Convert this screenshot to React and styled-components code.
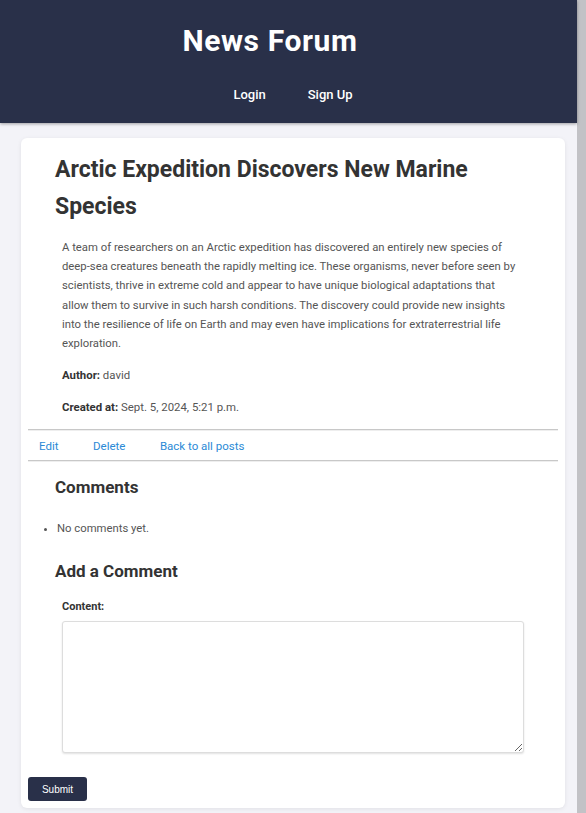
import React from 'react';
import styled, { createGlobalStyle } from 'styled-components';

const GlobalStyle = createGlobalStyle`
  html, body {
    margin: 0;
    padding: 0;
    background: #f3f3f8;
  }
  body {
    font-family: Roboto, "Liberation Sans", Arial, sans-serif;
    color: #333;
  }
  #root {
    width: calc(100% - 9px);
  }
`;

const post = {
  title: 'Arctic Expedition Discovers New Marine Species',
  content:
    'A team of researchers on an Arctic expedition has discovered an entirely new species of deep-sea creatures beneath the rapidly melting ice. These organisms, never before seen by scientists, thrive in extreme cold and appear to have unique biological adaptations that allow them to survive in such harsh conditions. The discovery could provide new insights into the resilience of life on Earth and may even have implications for extraterrestrial life exploration.',
  author: 'david',
  createdAt: 'Sept. 5, 2024, 5:21 p.m.',
};

const App = () => {
  return (
    <>
      <GlobalStyle />
      <Header>
        <SiteTitle>News Forum</SiteTitle>
        <Nav>
          <NavLink href="#">Login</NavLink>
          <NavLink href="#">Sign Up</NavLink>
        </Nav>
      </Header>

      <Main>
        <Card>
          <PostTitle>{post.title}</PostTitle>
          <PostBody>{post.content}</PostBody>
          <Meta>
            <strong>Author:</strong> {post.author}
          </Meta>
          <Meta>
            <strong>Created at:</strong> {post.createdAt}
          </Meta>

          <Divider $top={12} />
          <Actions>
            <ActionLink href="#">Edit</ActionLink>
            <ActionLink href="#">Delete</ActionLink>
            <ActionLink href="#">Back to all posts</ActionLink>
          </Actions>
          <Divider $top={0} />

          <SectionTitle $top={13}>Comments</SectionTitle>
          <CommentList>
            <li>No comments yet.</li>
          </CommentList>

          <SectionTitle $top={20}>Add a Comment</SectionTitle>
          <CommentForm onSubmit={(e) => e.preventDefault()}>
            <Label htmlFor="content">Content:</Label>
            <TextArea id="content" name="content" />
            <SubmitButton type="submit">Submit</SubmitButton>
          </CommentForm>
        </Card>
      </Main>

      <ScrollShade />
    </>
  );
};

const Header = styled.header`
  background: #293049;
  height: 123px;
  box-sizing: border-box;
  padding-top: 22px;
  box-shadow: 0 1px 3px rgba(0, 0, 0, 0.35);
  position: relative;
  z-index: 1;
`;

const SiteTitle = styled.h1`
  margin: 0;
  padding-right: 37px;
  text-align: center;
  color: #fff;
  font-size: 30px;
  font-weight: 700;
  line-height: 38px;
  letter-spacing: 0.6px;
`;

const Nav = styled.nav`
  display: flex;
  justify-content: center;
  gap: 42px;
  margin-top: 25px;
  padding-left: 9px;
`;

const NavLink = styled.a`
  color: #fff;
  text-decoration: none;
  font-size: 13px;
  font-weight: 500;
  line-height: 20px;
`;

const Main = styled.main`
  padding: 15px 12px 5px 21px;
`;

const Card = styled.div`
  background: #fff;
  border-radius: 6px;
  padding: 7px;
  box-shadow: 0 1px 4px rgba(0, 0, 0, 0.08);
`;

const PostTitle = styled.h2`
  margin: 6px 27px 0;
  font-size: 23px;
  font-weight: 700;
  line-height: 37px;
  color: #333;
`;

const PostBody = styled.p`
  margin: 13px 34px 0;
  font-size: 11.3px;
  line-height: 19.2px;
  color: #555;
`;

const Meta = styled.p`
  margin: 12px 34px 0;
  font-size: 11.4px;
  line-height: 20px;
  color: #555;

  strong {
    color: #333;
    font-weight: 700;
  }
`;

const Divider = styled.hr`
  margin: ${(p) => p.$top}px 0 0;
  border: 0;
  border-top: 1px solid #c8c8c8;
  border-bottom: 1px solid #eee;
`;

const Actions = styled.div`
  display: flex;
  gap: 34.5px;
  padding: 0 11px;
  height: 29px;
  align-items: center;
`;

const ActionLink = styled.a`
  color: #2b8ad6;
  text-decoration: none;
  font-size: 11.5px;
`;

const SectionTitle = styled.h3`
  margin: ${(p) => p.$top}px 27px 0;
  font-size: 17px;
  font-weight: 700;
  line-height: 24px;
  color: #333;
`;

const CommentList = styled.ul`
  margin: 20px 0 0;
  padding-left: 29px;
  font-size: 11.3px;
  line-height: 20px;
  color: #555;
  list-style: disc;
`;

const CommentForm = styled.form`
  display: flex;
  flex-direction: column;
  align-items: flex-start;
  margin-top: 16px;
`;

const Label = styled.label`
  margin-left: 34px;
  font-size: 11px;
  font-weight: 700;
  line-height: 16px;
  color: #333;
`;

const TextArea = styled.textarea`
  margin: 6px 0 0 34px;
  width: 462px;
  height: 132px;
  box-sizing: border-box;
  border: 1px solid #ddd;
  border-radius: 3px;
  box-shadow: 0 1px 2px rgba(0, 0, 0, 0.12);
  font-family: Roboto, sans-serif;
  resize: both;
`;

const SubmitButton = styled.button`
  margin-top: 24px;
  width: 59px;
  height: 24px;
  background: #293049;
  color: #fff;
  border: 0;
  border-radius: 3px;
  font-family: "Liberation Sans", Arial, sans-serif;
  font-size: 10px;
  cursor: pointer;
`;

const ScrollShade = styled.div`
  position: fixed;
  top: 0;
  right: 0;
  bottom: 0;
  width: 9px;
  background: rgba(0, 0, 0, 0.2);
  z-index: 2;
`;

export default App;
